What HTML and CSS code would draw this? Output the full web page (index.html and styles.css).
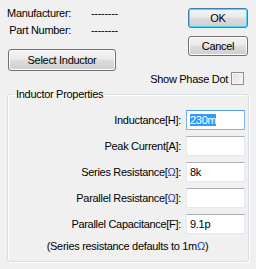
FILE: index.html
```html
<!DOCTYPE html>
<html lang="en">
<head>
    <meta charset="UTF-8">
    <title>Inductor</title>
    <link rel="stylesheet" href="styles.css">
</head>
<body>
    <div class="dialog">
        <div class="top">
            <div class="left">
                <div class="info">
                    <span class="lbl">Manufacturer:</span>
                    <span class="val">--------</span>
                    <span class="lbl">Part Number:</span>
                    <span class="val">--------</span>
                </div>
                <button class="btn select">Select Inductor</button>
            </div>
            <div class="right">
                <button class="btn default">OK</button>
                <button class="btn">Cancel</button>
                <label class="phase">Show Phase Dot <span class="check"></span></label>
            </div>
        </div>
        <fieldset class="group">
            <legend>Inductor Properties</legend>
            <div class="row">
                <span>Inductance[H]:</span>
                <div class="field focus"><span class="sel">230m</span></div>
            </div>
            <div class="row">
                <span>Peak Current[A]:</span>
                <div class="field"></div>
            </div>
            <div class="row">
                <span>Series Resistance[<i>Ω</i>]:</span>
                <div class="field">8k</div>
            </div>
            <div class="row">
                <span>Parallel Resistance[<i>Ω</i>]:</span>
                <div class="field"></div>
            </div>
            <div class="row">
                <span>Parallel Capacitance[F]:</span>
                <div class="field">9.1p</div>
            </div>
            <p class="note">(Series resistance defaults to 1m<i>Ω</i>)</p>
        </fieldset>
    </div>
</body>
</html>
```

FILE: styles.css
```css
html,
body,
p {
    margin: 0;
    padding: 0;
}
body {
    background-color: #f0f0f0;
    font-family: "Liberation Sans", Arial, sans-serif;
    font-size: 11px;
    letter-spacing: -0.3px;
    color: #000;
    width: 256px;
    height: 269px;
    overflow: hidden;
    white-space: nowrap;
}
i {
    font-style: normal;
    color: #1e3e9a;
}
.top {
    display: flex;
    justify-content: space-between;
    height: 88px;
}
.left {
    padding: 7px 0 0 7px;
}
.info {
    display: grid;
    grid-template-columns: 64px auto;
    column-gap: 20px;
    row-gap: 4px;
    line-height: 13px;
}
.lbl {
    text-align: right;
}
.btn {
    display: block;
    font-family: inherit;
    font-size: 11px;
    letter-spacing: -0.3px;
    color: #000;
    border: 1px solid #707070;
    border-radius: 3px;
    background: linear-gradient(#f2f2f2 0%, #ebebeb 45%, #dddddd 50%, #cfcfcf 100%);
    box-shadow: inset 0 0 0 1px #fcfcfc;
    padding: 0;
    outline: none;
}
.select {
    width: 108px;
    height: 22px;
    margin: 12px 0 0 1px;
}
.right {
    display: flex;
    flex-direction: column;
    align-items: flex-end;
    padding: 8px 8px 0 0;
}
.right .btn {
    width: 60px;
    height: 20px;
    margin-bottom: 8px;
}
.right .default {
    border-color: #3c7fb1;
    box-shadow: inset 0 0 0 1px #48d8fb;
}
.phase {
    display: flex;
    align-items: center;
    gap: 3px;
    margin: 8px 4px 0 0;
}
.check {
    width: 11px;
    height: 11px;
    border: 1px solid #8e8f8f;
    background: linear-gradient(135deg, #dcdcdc, #fbfbfb);
    box-shadow: inset 0 0 0 1px #f4f4f4;
}
.group {
    margin: 0 0 0 7px;
    padding: 9px 3px 0 0;
    width: 242px;
    height: 174px;
    box-sizing: border-box;
    border: 1px solid #d5dfe5;
    border-radius: 3px;
    box-shadow: inset 1px 1px 0 #fff, 1px 1px 0 #fff;
}
.group legend {
    margin-left: 6px;
    padding: 0 2px;
    line-height: 13px;
}
.row {
    display: flex;
    justify-content: flex-end;
    align-items: center;
    gap: 5px;
    margin-bottom: 6px;
}
.field {
    width: 59px;
    height: 20px;
    box-sizing: border-box;
    background-color: #fff;
    border: 1px solid #e3e9ef;
    border-top-color: #abadb3;
    padding: 3px 0 0 3px;
    line-height: 13px;
}
.focus {
    border-color: #7eb4ea;
    border-top-color: #569de5;
}
.sel {
    background-color: #3399ff;
    color: #fff;
}
.note {
    text-align: center;
    margin: 2px 0 0 2px;
}
```
